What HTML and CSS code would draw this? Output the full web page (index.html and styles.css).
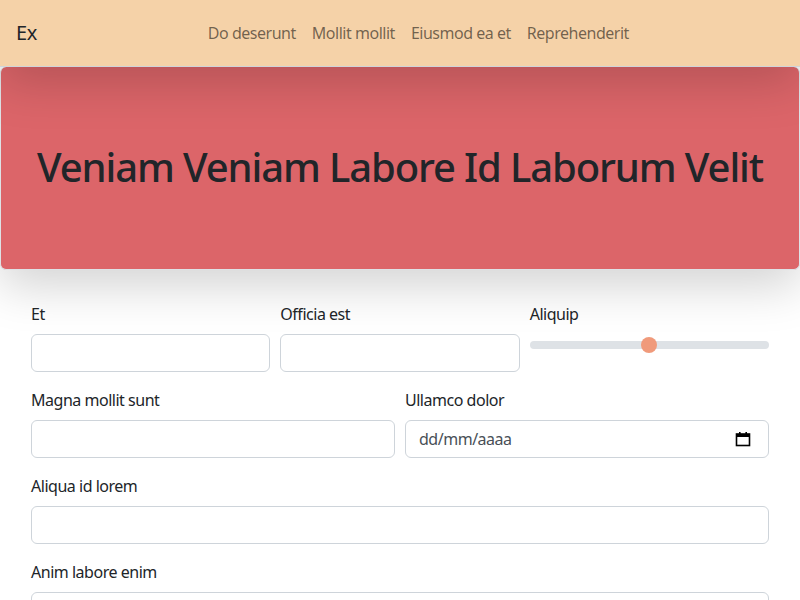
FILE: index.html
```html
<!DOCTYPE html>
<html lang="es">
<head>
<meta charset="utf-8">
<title>Ex</title>
<link rel="stylesheet" href="styles.css">
</head>
<body>
<nav class="navbar">
  <a class="brand" href="#">Ex</a>
  <ul class="nav">
    <li><a href="#">Do deserunt</a></li>
    <li><a href="#">Mollit mollit</a></li>
    <li><a href="#">Eiusmod ea et</a></li>
    <li><a href="#">Reprehenderit</a></li>
  </ul>
</nav>
<header class="hero">
  <h1>Veniam Veniam Labore Id Laborum Velit</h1>
</header>
<main class="form">
  <div class="row three">
    <div class="field">
      <label>Et</label>
      <div class="input"></div>
    </div>
    <div class="field">
      <label>Officia est</label>
      <div class="input"></div>
    </div>
    <div class="field">
      <label>Aliquip</label>
      <div class="range"><span class="thumb"></span></div>
    </div>
  </div>
  <div class="row two">
    <div class="field">
      <label>Magna mollit sunt</label>
      <div class="input"></div>
    </div>
    <div class="field">
      <label>Ullamco dolor</label>
      <div class="input date">
        <span class="date-text">dd/mm/aaaa</span>
        <svg class="cal" width="16" height="16" viewBox="0 0 16 16">
          <rect x="1.5" y="3" width="13" height="11.5" fill="none" stroke="#000" stroke-width="1.6"/>
          <rect x="1.5" y="3" width="13" height="3" fill="#000"/>
          <rect x="4" y="1" width="1.6" height="3" fill="#000"/>
          <rect x="10.4" y="1" width="1.6" height="3" fill="#000"/>
        </svg>
      </div>
    </div>
  </div>
  <div class="row one">
    <div class="field">
      <label>Aliqua id lorem</label>
      <div class="input"></div>
    </div>
  </div>
  <div class="row one">
    <div class="field">
      <label>Anim labore enim</label>
      <div class="input"></div>
    </div>
  </div>
</main>
</body>
</html>
```
FILE: styles.css
```css
* { box-sizing: border-box; }
html, body { margin: 0; padding: 0; }
body {
  font-family: "Noto Sans", "Open Sans", sans-serif;
  font-size: 16px;
  line-height: 1.5;
  letter-spacing: -0.03em;
  color: #212529;
  background: #fff;
  overflow: hidden;
}
.navbar {
  position: relative;
  z-index: 2;
  display: flex;
  align-items: center;
  height: 67px;
  padding: 0 16px;
  background: #f5d2a8;
  border-bottom: 1px solid #cfd4da;
  box-shadow: 0 16px 48px rgba(0,0,0,0.175);
}
.brand {
  font-size: 20px;
  color: #212529;
  text-decoration: none;
  margin-right: 16px;
}
.nav {
  display: flex;
  list-style: none;
  margin: 0 auto;
  padding: 0;
}
.nav a {
  display: block;
  padding: 8px 8px;
  color: rgba(0,0,0,0.55);
  text-decoration: none;
}
.hero {
  position: relative;
  z-index: 1;
  height: 203px;
  display: flex;
  align-items: center;
  justify-content: center;
  background: #dc6569;
  border: 1px solid #dee2e6;
  border-top: 0;
  border-radius: 6px;
  box-shadow: 0 16px 48px rgba(0,0,0,0.175);
}
.hero h1 {
  margin: 0;
  font-size: 40px;
  font-weight: 500;
  line-height: 1.2;
  letter-spacing: -0.028em;
  color: #212529;
  padding-bottom: 2px;
}
.form {
  padding: 32px 31px 0;
  display: flex;
  flex-direction: column;
  gap: 16px;
}
.row { display: grid; gap: 10px; }
.row.three { grid-template-columns: 1fr 1fr 1fr; }
.row.two { grid-template-columns: 1fr 1fr; }
.row.one { grid-template-columns: 1fr; }
.field label {
  display: block;
  margin-bottom: 8px;
}
.input {
  height: 38px;
  border: 1px solid #ced4da;
  border-radius: 6px;
  background: #fff;
}
.date {
  display: flex;
  align-items: center;
  justify-content: space-between;
  padding: 0 17px 0 13px;
}
.date-text { color: #495057; }
.cal { display: block; }
.range {
  position: relative;
  height: 8px;
  margin-top: 15px;
  border-radius: 4px;
  background: #dee2e6;
}
.thumb {
  position: absolute;
  left: 50%;
  top: 50%;
  width: 16px;
  height: 16px;
  margin: -8px 0 0 -8px;
  border-radius: 50%;
  background: #f09a7b;
}
```
